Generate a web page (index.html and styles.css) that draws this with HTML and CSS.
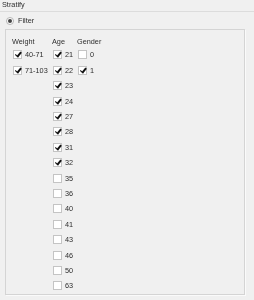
FILE: index.html
```html
<!DOCTYPE html>
<html>
<head>
<meta charset="utf-8">
<link rel="stylesheet" href="styles.css">
</head>
<body>
<div class="page">
<div class="title">Stratify</div>
<div class="radio-row"><span class="radio"><span class="dot"></span></span><span class="label">Filter</span></div>
<div class="group">
  <div class="col col-weight">
    <div class="head">Weight</div>
    <div class="item"><span class="cb on"></span><span>40-71</span></div>
    <div class="item"><span class="cb on"></span><span>71-103</span></div>
  </div>
  <div class="col col-age">
    <div class="head">Age</div>
    <div class="item"><span class="cb on"></span><span>21</span></div>
    <div class="item"><span class="cb on"></span><span>22</span></div>
    <div class="item"><span class="cb on"></span><span>23</span></div>
    <div class="item"><span class="cb on"></span><span>24</span></div>
    <div class="item"><span class="cb on"></span><span>27</span></div>
    <div class="item"><span class="cb on"></span><span>28</span></div>
    <div class="item"><span class="cb on"></span><span>31</span></div>
    <div class="item"><span class="cb on"></span><span>32</span></div>
    <div class="item"><span class="cb"></span><span>35</span></div>
    <div class="item"><span class="cb"></span><span>36</span></div>
    <div class="item"><span class="cb"></span><span>40</span></div>
    <div class="item"><span class="cb"></span><span>41</span></div>
    <div class="item"><span class="cb"></span><span>43</span></div>
    <div class="item"><span class="cb"></span><span>46</span></div>
    <div class="item"><span class="cb"></span><span>50</span></div>
    <div class="item"><span class="cb"></span><span>63</span></div>
  </div>
  <div class="col col-gender">
    <div class="head">Gender</div>
    <div class="item"><span class="cb"></span><span>0</span></div>
    <div class="item"><span class="cb on"></span><span>1</span></div>
  </div>
</div>
</div>
</body>
</html>
```
FILE: styles.css
```css
html, body {
  margin: 0;
  padding: 0;
  background: #f0f0f0;
  width: 254px;
  height: 300px;
  overflow: hidden;
}
.page {
  width: 254px;
  height: 300px;
  background: #f0f0f0;
  font-family: "Liberation Sans", Arial, sans-serif;
  font-size: 7.3px;
  color: #2e2e2e;
  will-change: transform;
}
.title {
  height: 11px;
  line-height: 10px;
  padding-left: 2px;
  border-bottom: 1px solid #dcdcdc;
}
.radio-row {
  display: flex;
  align-items: center;
  height: 17px;
  padding-left: 6px;
}
.radio {
  width: 6px;
  height: 6px;
  border: 1px solid #b4b4b4;
  border-radius: 50%;
  background: #fff;
  display: flex;
  align-items: center;
  justify-content: center;
}
.dot {
  width: 4px;
  height: 4px;
  border-radius: 50%;
  background: #444;
}
.label {
  margin-left: 4px;
}
.group {
  margin-left: 5px;
  width: 240px;
  height: 266px;
  border: 1px solid #d4d4d4;
  box-shadow: 1px 1px 0 #fafafa;
  padding: 6px 0 0 6px;
  box-sizing: border-box;
  display: flex;
}
.col-weight { width: 40px; }
.col-age { width: 25px; }
.col-gender { width: 40px; }
.head {
  height: 11.3px;
  display: flex;
  align-items: center;
}
.item {
  height: 15.4px;
  display: flex;
  align-items: center;
  padding-left: 1px;
}
.cb {
  width: 7px;
  height: 7px;
  border: 1px solid #c4c4c4;
  background: #fff;
  margin-right: 3px;
  position: relative;
}
.cb.on::after {
  content: "";
  position: absolute;
  left: 1px;
  top: 0px;
  width: 2px;
  height: 5px;
  border-right: 2px solid #111;
  border-bottom: 1.5px solid #111;
  transform: rotate(40deg) translate(1px, -1px);
}
```
